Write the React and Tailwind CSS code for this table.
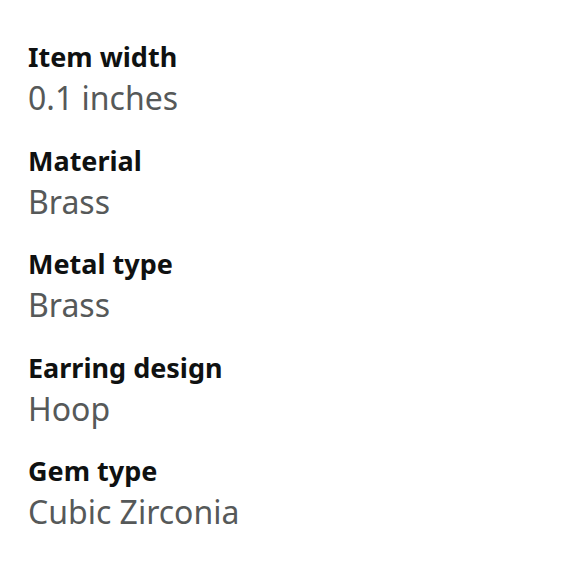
import React from "react";

const specs = [
  { label: "Item width", value: "0.1 inches" },
  { label: "Material", value: "Brass" },
  { label: "Metal type", value: "Brass" },
  { label: "Earring design", value: "Hoop" },
  { label: "Gem type", value: "Cubic Zirconia" },
];

export default function App() {
  return (
    <div
      className="bg-white min-h-screen px-[28px] pt-[38px]"
      style={{ fontFamily: '"Noto Sans", Arial, sans-serif' }}
    >
      <div className="flex flex-col gap-[21.5px]">
        {specs.map((s) => (
          <div key={s.label}>
            <p className="text-[27px] leading-[38px] font-bold text-[#0f1111]">
              {s.label}
            </p>
            <p className="text-[32px] leading-[44px] text-[#565959]">{s.value}</p>
          </div>
        ))}
      </div>
    </div>
  );
}
